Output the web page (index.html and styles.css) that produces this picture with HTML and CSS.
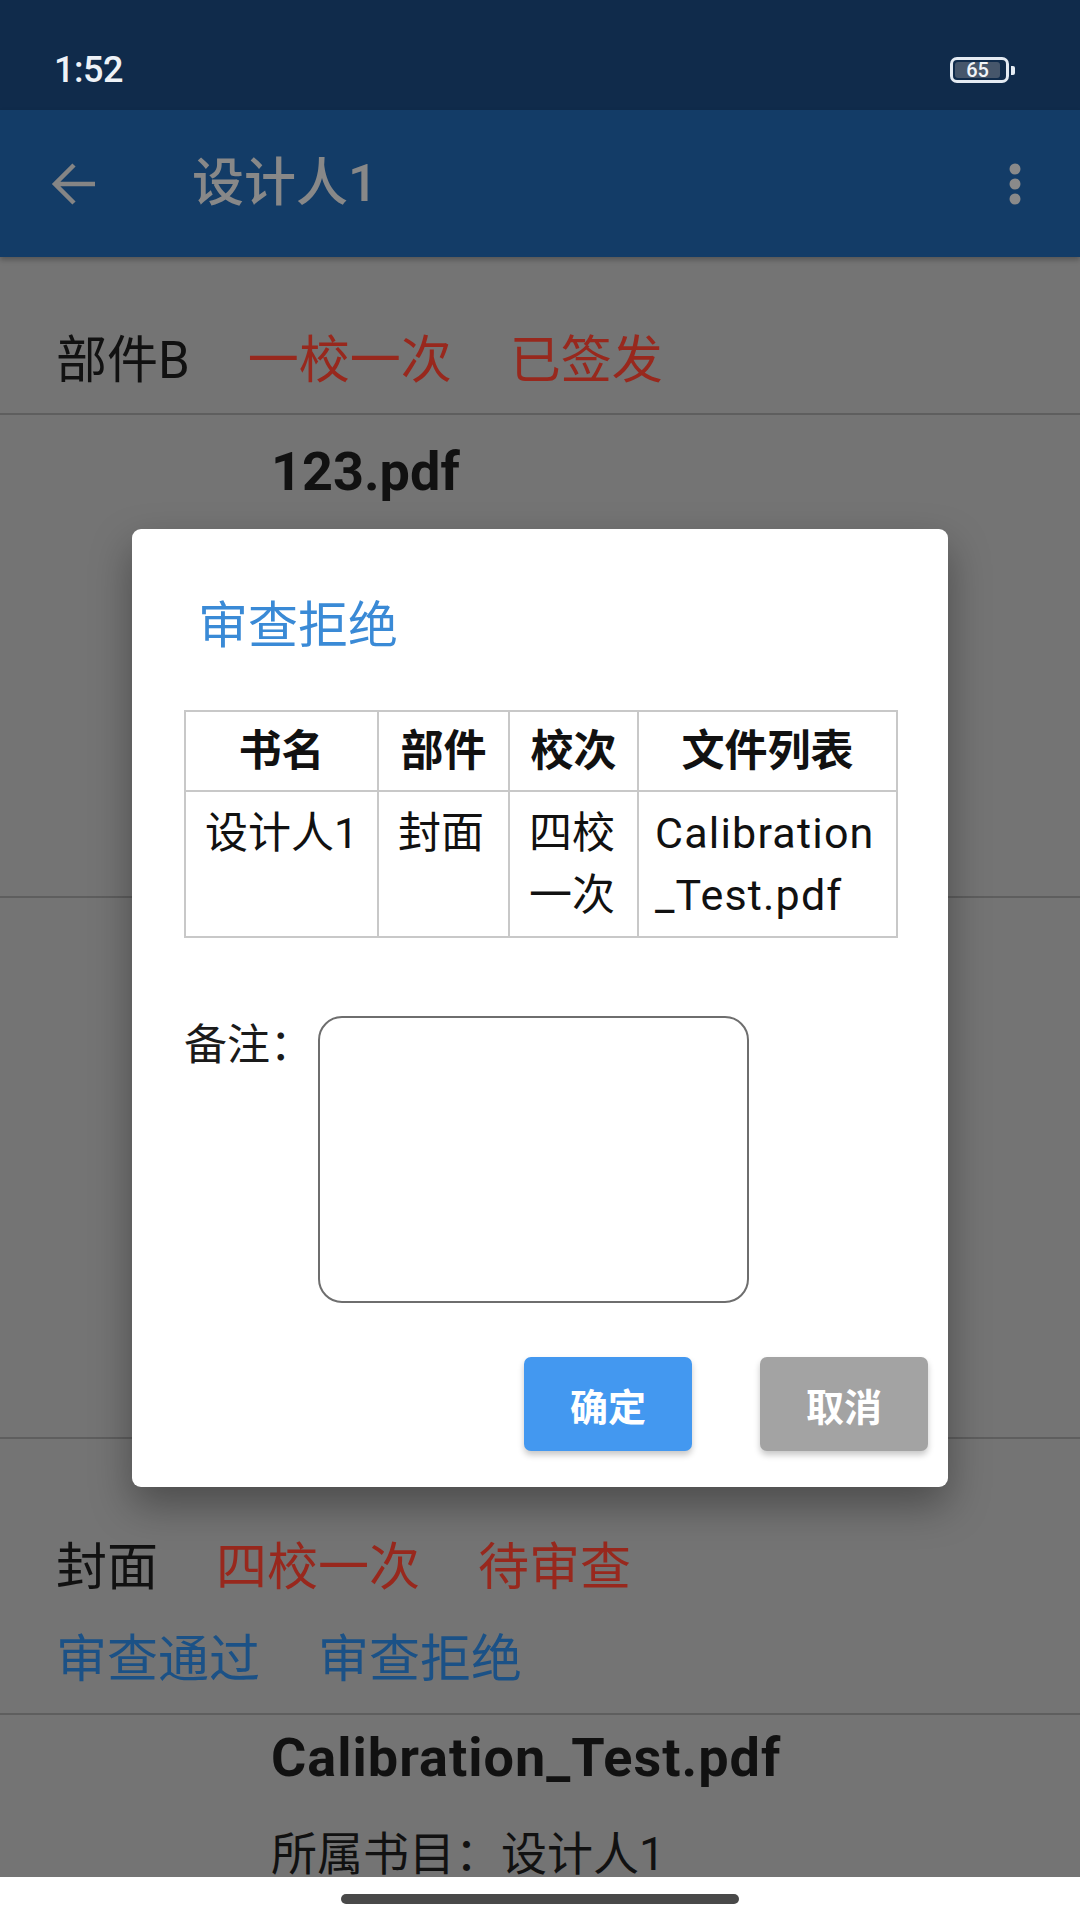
FILE: index.html
```html
<!DOCTYPE html>
<html lang="zh-CN">
<head>
<meta charset="utf-8">
<title>设计人1</title>
<link rel="stylesheet" href="styles.css">
</head>
<body>
<div class="screen">
  <div class="statusbar">
    <span class="time">1:52</span>
    <div class="battery">
      <div class="battery-body"><div class="battery-fill">65</div></div>
      <div class="battery-tip"></div>
    </div>
  </div>
  <header class="appbar">
    <svg class="back" width="46" height="44" viewBox="0 0 46 44"><path d="M44 22H5M23 3L4 22l19 19" fill="none" stroke="#858585" stroke-width="4.5" stroke-linejoin="miter"/></svg>
    <h1 class="title">设计人1</h1>
    <svg class="more" width="14" height="46" viewBox="0 0 14 46"><circle cx="7" cy="8" r="5.5" fill="#8a8a8a"/><circle cx="7" cy="23" r="5.5" fill="#8a8a8a"/><circle cx="7" cy="38" r="5.5" fill="#8a8a8a"/></svg>
  </header>
  <main class="list">
    <section class="card-head head-first">
      <div class="meta-row"><span class="part">部件B</span><span class="red">一校一次</span><span class="red">已签发</span></div>
    </section>
    <section class="file file-first">
      <div class="file-name">123.pdf</div>
      <div class="file-info">所属书目：设计人1</div>
    </section>
    <section class="file-rest"></section>
    <section class="card-head head-second">
      <div class="meta-row"><span class="part">封面</span><span class="red">四校一次</span><span class="red">待审查</span></div>
      <div class="meta-row actions"><span class="link">审查通过</span><span class="link">审查拒绝</span></div>
    </section>
    <section class="file file-second">
      <div class="file-name wide">Calibration_Test.pdf</div>
      <div class="file-info">所属书目：设计人1</div>
    </section>
  </main>
  <div class="navbar"><div class="pill"></div></div>

  <div class="dialog-layer">
    <div class="dialog">
      <h2 class="dialog-title">审查拒绝</h2>
      <table class="info-table">
        <colgroup><col class="c1"><col class="c2"><col class="c3"><col class="c4"></colgroup>
        <thead>
          <tr><th>书名</th><th>部件</th><th>校次</th><th>文件列表</th></tr>
        </thead>
        <tbody>
          <tr><td>设计人1</td><td>封面</td><td>四校一次</td><td class="latin">Calibration<wbr>_Test.pdf</td></tr>
        </tbody>
      </table>
      <div class="remark">
        <label class="remark-label" for="remark">备注：</label>
        <textarea id="remark" class="remark-input"></textarea>
      </div>
      <div class="buttons">
        <button class="btn btn-ok">确定</button>
        <button class="btn btn-cancel">取消</button>
      </div>
    </div>
  </div>
</div>
</body>
</html>
```

FILE: styles.css
```css
* { box-sizing: border-box; }
html, body { margin: 0; padding: 0; }
body {
  width: 1080px;
  height: 1920px;
  overflow: hidden;
  font-family: Roboto, "Noto Sans CJK SC", sans-serif;
  color: #111;
}
.screen {
  position: relative;
  width: 1080px;
  height: 1920px;
  display: flex;
  flex-direction: column;
  background: #747474;
}

/* status bar */
.statusbar {
  height: 110px;
  flex: none;
  background: #102b4b;
  display: flex;
  align-items: center;
  justify-content: space-between;
  padding: 30px 65px 0 54px;
}
.time {
  color: #eef2f7;
  font-size: 36px;
  font-weight: 500;
  letter-spacing: -0.5px;
}
.battery { display: flex; align-items: center; }
.battery-body {
  width: 59px;
  height: 26px;
  border: 3px solid #e4ebf3;
  border-radius: 7px;
  padding: 2px;
}
.battery-fill {
  width: 45px;
  height: 100%;
  background: #46566b;
  border-radius: 3px;
  color: #f1f4f8;
  font-size: 20px;
  line-height: 16px;
  text-align: center;
  font-weight: 500;
}
.battery-tip {
  width: 4px;
  height: 9px;
  margin-left: 2px;
  background: #e4ebf3;
  border-radius: 0 2px 2px 0;
}

/* app bar */
.appbar {
  height: 147px;
  flex: none;
  background: #133c67;
  display: flex;
  align-items: center;
  padding: 0 58px 0 51px;
  box-shadow: 0 3px 5px rgba(0,0,0,0.25);
  position: relative;
  z-index: 1;
}
.back { flex: none; }
.title {
  margin: 0 0 0 95px;
  flex: 1;
  font-size: 52px;
  font-weight: 500;
  color: #888;
  line-height: 60px;
}
.more { flex: none; }

/* list */
.list {
  flex: 1;
  display: flex;
  flex-direction: column;
  overflow: hidden;
}
.list section { flex: none; border-bottom: 2px solid #5e5e5e; }
.card-head { padding-left: 56px; }
.head-first { height: 158px; padding-top: 78px; }
.head-second { height: 276px; padding-top: 103px; }
.meta-row {
  display: flex;
  gap: 58px;
  font-size: 51px;
  line-height: 51px;
  white-space: nowrap;
}
.meta-row + .meta-row { margin-top: 41px; }
.red { color: #98281d; }
.link { color: #1b5186; }

.file { padding-left: 271px; }
.file-first { height: 483px; padding-top: 30px; }
.file-rest { height: 541px; }
.file-second { padding-top: 16px; border-bottom: none !important; }
.file-name {
  font-size: 54px;
  font-weight: 700;
  line-height: 54px;
}
.file-name.wide { letter-spacing: 1px; }
.file-info {
  margin-top: 46px;
  font-size: 46px;
  line-height: 46px;
  white-space: nowrap;
}

.navbar {
  height: 43px;
  flex: none;
  background: #fff;
  display: flex;
  justify-content: center;
  padding-top: 17px;
}
.pill {
  width: 398px;
  height: 10px;
  border-radius: 5px;
  background: #494949;
}

/* dialog */
.dialog-layer {
  position: absolute;
  inset: 0;
  display: flex;
  justify-content: center;
  align-items: flex-start;
  padding-top: 529px;
}
.dialog {
  width: 816px;
  height: 958px;
  background: #fff;
  border-radius: 9px;
  box-shadow: 0 18px 40px rgba(0,0,0,0.35);
  padding: 67px 20px 36px 52px;
  display: flex;
  flex-direction: column;
}
.dialog-title {
  margin: 0 0 54px 14px;
  font-size: 50px;
  line-height: 60px;
  font-weight: 400;
  color: #3a8ad6;
}
.info-table {
  width: 712px;
  border-collapse: collapse;
  table-layout: fixed;
  font-size: 43px;
  line-height: 62px;
}
.c1 { width: 193px; }
.c2 { width: 131px; }
.c3 { width: 129px; }
.c4 { width: 259px; }
.info-table th, .info-table td {
  border: 2px solid #c8c8c8;
  vertical-align: top;
}
.info-table th {
  font-weight: 700;
  text-align: center;
  padding: 8px 10px;
}
.info-table td {
  padding: 10px 14px 10px 19px;
  text-align: left;
}
.info-table td.latin { letter-spacing: 1.2px; padding-left: 16px; }
.remark {
  margin-top: 78px;
  display: flex;
  align-items: flex-start;
}
.remark-label {
  width: 134px;
  font-size: 43px;
  line-height: 43px;
  padding-top: 8px;
  color: #1a1a1a;
}
.remark-input {
  width: 431px;
  height: 287px;
  border: 2px solid #6e6e6e;
  border-radius: 24px;
  resize: none;
  background: #fff;
  font-size: 40px;
}
.buttons {
  margin-top: auto;
  display: flex;
  justify-content: flex-end;
  gap: 68px;
}
.btn {
  width: 168px;
  height: 94px;
  border: none;
  border-radius: 7px;
  color: #fff;
  font-family: Roboto, "Noto Sans CJK SC", sans-serif;
  font-size: 38px;
  font-weight: 700;
  box-shadow: 0 4px 6px rgba(0,0,0,0.22);
}
.btn-ok { background: #4398f0; }
.btn-cancel { background: #a3a3a3; }
```
